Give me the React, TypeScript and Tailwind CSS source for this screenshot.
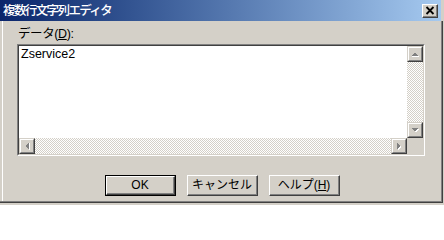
import React from "react";

function Arrow({ dir }: { dir: "up" | "down" | "left" | "right" }) {
  let pts = "";
  if (dir === "up") pts = "3,9 7,5 11,9";
  if (dir === "down") pts = "3,5 7,9 11,5";
  if (dir === "left") pts = "9,3 5,7 9,11";
  if (dir === "right") pts = "5,3 9,7 5,11";
  return (
    <svg width="14" height="14" viewBox="0 0 14 14" shapeRendering="crispEdges">
      <polygon points={pts} fill="#ffffff" transform="translate(1,1)" />
      <polygon points={pts} fill="#808080" />
    </svg>
  );
}

function ScrollBtn({ dir }: { dir: "up" | "down" | "left" | "right" }) {
  return (
    <div className="w-[16px] h-[16px] shrink-0 bg-[#D4D0C8] border-t border-l border-r border-b border-t-[#D4D0C8] border-l-[#D4D0C8] border-r-[#404040] border-b-[#404040]">
      <div className="w-full h-full border-t border-l border-r border-b border-t-white border-l-white border-r-[#808080] border-b-[#808080] flex items-center justify-center">
        <Arrow dir={dir} />
      </div>
    </div>
  );
}

function Button({ children, def }: { children: React.ReactNode; def?: boolean }) {
  const inner = (
    <div className="w-full h-full border-t border-l border-r border-b border-t-white border-l-white border-r-[#404040] border-b-[#404040]">
      <div className="w-full h-full border-r border-b border-r-[#808080] border-b-[#808080] flex items-center justify-center text-[12px] leading-none text-black">
        {children}
      </div>
    </div>
  );
  return (
    <div className={def ? "w-[71px] h-[21px] border border-black" : "w-[71px] h-[21px]"}>{inner}</div>
  );
}

export default function App() {
  return (
    <div className="w-[444px] h-[205px] bg-[#D4D0C8] flex flex-col overflow-hidden font-['Liberation_Sans','Noto_Sans_CJK_JP',sans-serif] select-none">
      {/* title bar */}
      <div className="w-[441px] h-[21px] shrink-0 bg-gradient-to-r from-[#0A246A] to-[#A6CAF0] flex items-center justify-between pl-[3px] pr-[3px]">
        <span className="text-white text-[12.5px] leading-none tracking-[-1.6px] font-medium font-['Noto_Sans_CJK_JP',sans-serif]">
          複数行文字列エディタ
        </span>
        <div className="w-[16px] h-[14px] bg-[#D4D0C8] border-t border-l border-r border-b border-t-white border-l-white border-r-[#404040] border-b-[#404040]">
          <div className="w-full h-full border-r border-b border-r-[#808080] border-b-[#808080] flex items-center justify-center">
            <svg width="10" height="9" viewBox="0 0 10 9">
              <path d="M1.5 1 L8.5 8 M8.5 1 L1.5 8" stroke="#000" strokeWidth="1.8" />
            </svg>
          </div>
        </div>
      </div>
      {/* body */}
      <div className="w-[443px] h-[182px] border-r border-b border-r-[#404040] border-b-[#404040]">
        <div className="w-full h-full border-r border-b border-r-[#808080] border-b-[#808080] pl-[2px]">
          <div className="w-full h-full border-l border-l-white pl-[14px] pt-[6px] flex flex-col">
            <div className="h-[14px] ml-[1px] text-[12.5px] leading-[14px] text-black tracking-[-0.4px]">
              データ(<span className="underline underline-offset-[1px]">D</span>):
            </div>
            {/* text box */}
            <div className="mt-[3px] w-[408px] h-[112px] border-t border-l border-r border-b border-t-[#808080] border-l-[#808080] border-r-white border-b-white">
              <div className="w-full h-full border-t border-l border-r border-b border-t-[#404040] border-l-[#404040] border-r-[#D4D0C8] border-b-[#D4D0C8] bg-white flex flex-col">
                <div className="flex h-[92px]">
                  <div className="flex-1 pl-[2px] pt-[1px] text-[12.5px] leading-[14px] text-black">Zservice2</div>
                  <div className="w-[16px] h-full flex flex-col">
                    <ScrollBtn dir="up" />
                    <div className="flex-1 bg-[repeating-conic-gradient(#d4d0c8_0_25%,#ffffff_0_50%)] bg-[length:2px_2px]" />
                    <ScrollBtn dir="down" />
                  </div>
                </div>
                <div className="flex h-[16px]">
                  <ScrollBtn dir="left" />
                  <div className="flex-1 bg-[repeating-conic-gradient(#d4d0c8_0_25%,#ffffff_0_50%)] bg-[length:2px_2px]" />
                  <ScrollBtn dir="right" />
                  <div className="w-[16px] h-full bg-[#D4D0C8]" />
                </div>
              </div>
            </div>
            {/* buttons */}
            <div className="mt-[19px] ml-[88px] flex gap-[11px]">
              <Button def>OK</Button>
              <Button>キャンセル</Button>
              <Button>
                ヘルプ(<span className="underline underline-offset-[1px]">H</span>)
              </Button>
            </div>
          </div>
        </div>
      </div>
    </div>
  );
}
